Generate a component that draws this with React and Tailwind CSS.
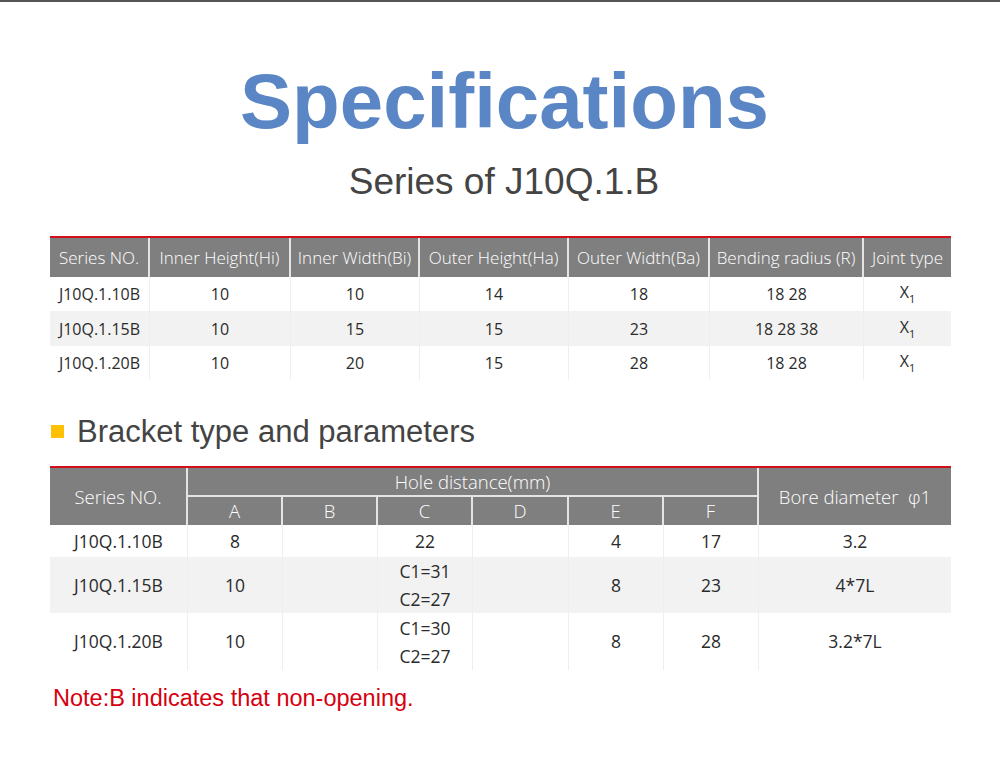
import React from "react";

// spec table data
const specRows = [
  ["J10Q.1.10B", "10", "10", "14", "18", "18 28"],
  ["J10Q.1.15B", "10", "15", "15", "23", "18 28 38"],
  ["J10Q.1.20B", "10", "20", "15", "28", "18 28"],
];

const specHead = [
  "Series NO.",
  "Inner Height(Hi)",
  "Inner Width(Bi)",
  "Outer Height(Ha)",
  "Outer Width(Ba)",
  "Bending radius (R)",
  "Joint type",
];

// bracket rows: series, A, B, C (array = two lines), D, E, F, bore
const bracketRows = [
  ["J10Q.1.10B", "8", "", ["22"], "", "4", "17", "3.2"],
  ["J10Q.1.15B", "10", "", ["C1=31", "C2=27"], "", "8", "23", "4*7L"],
  ["J10Q.1.20B", "10", "", ["C1=30", "C2=27"], "", "8", "28", "3.2*7L"],
];

const sans = { fontFamily: '"Liberation Sans", Arial, sans-serif' };
const table = { fontFamily: '"Open Sans", "Noto Sans", sans-serif' };

function SpecTable() {
  return (
    <div className="ml-[50px] w-[901px] border-t-2 border-[#d0101b]" style={table}>
      <div className="grid grid-cols-[100px_141px_129px_149px_141px_154px_87px] bg-[#7f7f7f] text-[17px] font-light text-white">
        {specHead.map((h, i) => (
          <div
            key={h}
            className={
              "flex h-[39px] items-center justify-center whitespace-nowrap " +
              (i < specHead.length - 1 ? "border-r-2 border-[#e4e4e4]" : "")
            }
          >
            {h}
          </div>
        ))}
      </div>
      {specRows.map((row, r) => (
        <div
          key={row[0]}
          className={
            "grid grid-cols-[100px_141px_129px_149px_141px_154px_87px] text-[16px] text-[#2b2b2b] " +
            (r === 1 ? "bg-[#f2f2f2] h-[35px]" : "bg-white h-[34px]")
          }
        >
          {row.map((c, i) => (
            <div key={i} className="flex items-center justify-center border-r border-[#eeeeee]">
              {c}
            </div>
          ))}
          <div className="flex items-center justify-center">
            <span>
              X<span className="text-[11px] align-[-5px]">1</span>
            </span>
          </div>
        </div>
      ))}
    </div>
  );
}

function BracketTable() {
  const cols = "grid grid-cols-[138px_95px_95px_95px_96px_95px_95px_192px]";
  return (
    <div className="ml-[50px] w-[901px] border-t-2 border-[#d0101b]" style={table}>
      {/* two-level header */}
      <div className={cols + " grid-rows-[29px_28px] bg-[#7f7f7f] text-[18.5px] font-light text-white"}>
        <div className="row-span-2 flex items-center justify-center border-r-2 border-[#e4e4e4]">
          Series NO.
        </div>
        <div className="col-span-6 flex items-center justify-center border-r-2 border-b-2 border-[#e4e4e4]">
          Hole distance(mm)
        </div>
        <div className="row-span-2 flex items-center justify-center whitespace-pre">
          Bore diameter  φ1
        </div>
        {["A", "B", "C", "D", "E", "F"].map((l) => (
          <div key={l} className="flex items-center justify-center border-r-2 border-[#e4e4e4]">
            {l}
          </div>
        ))}
      </div>
      {bracketRows.map((row, r) => (
        <div
          key={row[0]}
          className={
            cols +
            " text-[17.5px] text-[#2b2b2b] " +
            (r === 0 ? "h-[32px] bg-white" : r === 1 ? "h-[56px] bg-[#f2f2f2]" : "h-[57px] bg-white")
          }
        >
          {row.map((c, i) => (
            <div
              key={i}
              className={
                "flex flex-col items-center justify-center " +
                (i < row.length - 1 ? "border-r border-[#eeeeee]" : "")
              }
            >
              {Array.isArray(c)
                ? c.map((line) => (
                    <span key={line} className="leading-[28px]">
                      {line}
                    </span>
                  ))
                : c}
            </div>
          ))}
        </div>
      ))}
    </div>
  );
}

export default function App() {
  return (
    <div className="w-[1000px] min-h-[762px] bg-white border-t-2 border-[#555555]">
      {/* Title block */}
      <h1
        className="mt-[60px] pl-[9px] text-center text-[78px] leading-none font-bold text-[#5a86c5]"
        style={sans}
      >
        Specifications
      </h1>
      <p className="mt-[23px] pl-[8px] text-center text-[37px] leading-none text-[#444444]" style={sans}>
        Series of J10Q.1.B
      </p>

      <div className="mt-[36px]">
        <SpecTable />
      </div>

      {/* Section heading */}
      <div className="mt-[36px] ml-[51px] flex h-[31px] items-center gap-[13px]" style={sans}>
        <span className="h-[13px] w-[13px] bg-[#ffc000]" />
        <span className="text-[31px] leading-none text-[#444444]">Bracket type and parameters</span>
      </div>

      <div className="mt-[19px]">
        <BracketTable />
      </div>

      <p className="mt-[17px] ml-[53px] text-[23.5px] leading-none text-[#d6000f]" style={sans}>
        Note:B indicates that non-opening.
      </p>
    </div>
  );
}
